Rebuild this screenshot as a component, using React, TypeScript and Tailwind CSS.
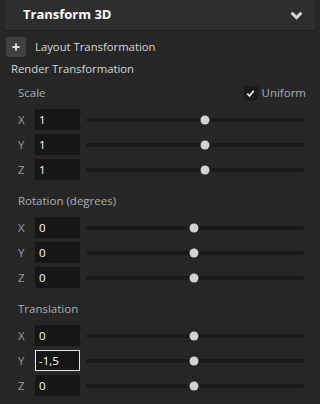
import React from 'react';

const font = { fontFamily: '"Open Sans", "Noto Sans", sans-serif' };

type Axis = { axis: string; value: string; pos: number; focused?: boolean };

function SliderRow({ axis, value, pos, focused }: Axis) {
  return (
    <div className="flex h-[21px] items-center pl-[18px] pr-[16px]">
      <span className="w-[17px] text-[11.5px] text-[#9a9fa6]">{axis}</span>
      <div
        className={
          focused
            ? 'flex h-[21px] w-[45px] items-center border border-[#e6e6e6] bg-[#161616] pl-[3px] text-[11.5px] text-white'
            : 'flex h-[21px] w-[45px] items-center bg-[#161616] pl-[4px] text-[11.5px] text-white'
        }
      >
        {value}
      </div>
      <div className="relative ml-[6px] h-[4px] flex-1 rounded-full bg-[#1a1a1a]">
        <div
          className="absolute top-1/2 h-[9px] w-[9px] -translate-x-1/2 -translate-y-1/2 rounded-full bg-[#d2d2d2]"
          style={{ left: `${pos}%` }}
        />
      </div>
    </div>
  );
}

function Section({ title, rows, extra }: { title: string; rows: Axis[]; extra?: React.ReactNode }) {
  return (
    <div className="flex flex-col">
      <div className="flex h-[20px] items-center justify-between pl-[18px] pr-[14px]">
        <span className="text-[11.5px] text-[#aab0b8]">{title}</span>
        {extra}
      </div>
      <div className="mt-[6px] flex flex-col gap-[4px]">
        {rows.map((r) => (
          <SliderRow key={r.axis} {...r} />
        ))}
      </div>
    </div>
  );
}

export default function App() {
  const uniform = (
    <label className="flex items-center gap-[4px]">
      <span className="flex h-[14px] w-[14px] items-center justify-center bg-[#1a1a1a]">
        <svg width="9" height="9" viewBox="0 0 9 9" fill="none">
          <path d="M1.2 4.6 L3.5 6.9 L7.8 1.8" stroke="#e8e8e8" strokeWidth="1.7" />
        </svg>
      </span>
      <span className="text-[11.5px] text-[#aab0b8]">Uniform</span>
    </label>
  );

  return (
    <div className="h-[404px] w-[320px] overflow-hidden bg-[#262626]" style={font}>
      <div className="mx-[5px] flex h-[31px] items-center justify-between border-b border-[#1c1c1c] bg-[#2e2e2e] pl-[18px] pr-[12px]">
        <span className="text-[13px] font-bold text-white">Transform 3D</span>
        <svg width="13" height="9" viewBox="0 0 13 9" fill="none">
          <path d="M1.6 1.8 L6.5 6.6 L11.4 1.8" stroke="#d8d8d8" strokeWidth="3" />
        </svg>
      </div>

      <div className="mt-[6px] flex h-[20px] items-center pl-[6px]">
        <div className="flex h-[20px] w-[20px] shrink-0 items-center justify-center rounded-[2px] bg-[#414141]">
          <svg width="8" height="8" viewBox="0 0 8 8">
            <path d="M4 0.5 V7.5 M0.5 4 H7.5" stroke="#e0e0e0" strokeWidth="2" />
          </svg>
        </div>
        <span className="ml-[9px] text-[11.3px] text-[#d4d8dc]">Layout Transformation</span>
      </div>

      <div className="mt-[2px] flex h-[20px] items-center pl-[11px]">
        <span className="text-[11.3px] text-[#d4d8dc]">Render Transformation</span>
      </div>

      <div className="mt-[4px] flex flex-col gap-[11px]">
        <Section
          title="Scale"
          extra={uniform}
          rows={[
            { axis: 'X', value: '1', pos: 54.6 },
            { axis: 'Y', value: '1', pos: 54.6 },
            { axis: 'Z', value: '1', pos: 54.6 },
          ]}
        />
        <Section
          title="Rotation (degrees)"
          rows={[
            { axis: 'X', value: '0', pos: 49.5 },
            { axis: 'Y', value: '0', pos: 49.5 },
            { axis: 'Z', value: '0', pos: 49.5 },
          ]}
        />
        <Section
          title="Translation"
          rows={[
            { axis: 'X', value: '0', pos: 49.5 },
            { axis: 'Y', value: '-1,5', pos: 49.5, focused: true },
            { axis: 'Z', value: '0', pos: 49.5 },
          ]}
        />
      </div>
    </div>
  );
}
